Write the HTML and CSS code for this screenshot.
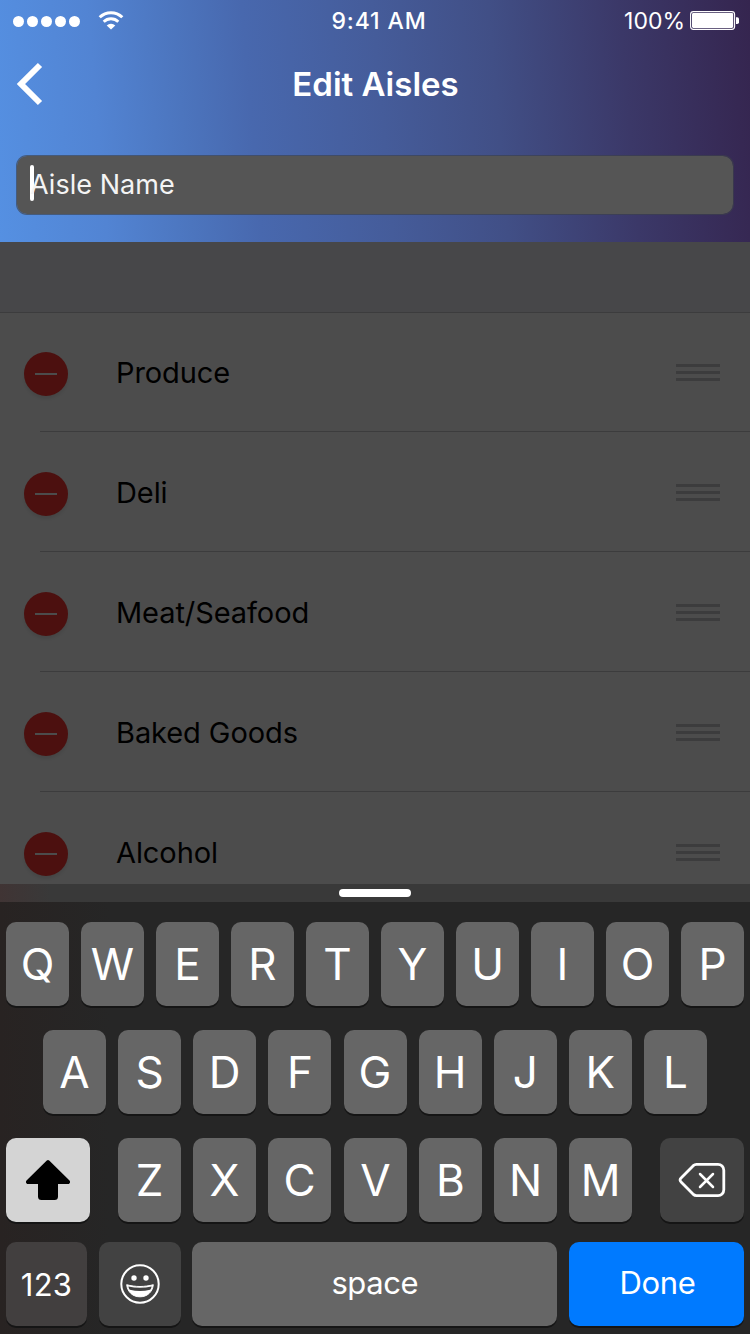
FILE: index.html
```html
<!DOCTYPE html>
<html lang="en">
<head>
<meta charset="utf-8">
<title>Edit Aisles</title>
<link rel="stylesheet" href="styles.css">
</head>
<body>
<div class="screen">
  <header class="header">
    <div class="status">
      <div class="status-left">
        <span class="dots"><i></i><i></i><i></i><i></i><i></i></span>
        <svg class="wifi" width="26" height="20" viewBox="0 0 26 20" fill="none" stroke="#fff">
          <path d="M1.700 6.300a16 16 0 0 1 22.600 0" stroke-width="3"/>
          <path d="M5.700 10.800a10.300 10.300 0 0 1 14.600 0" stroke-width="2.800"/>
          <path d="M13 18.500l-4.300-4.100a6.200 6.200 0 0 1 8.600 0z" fill="#fff" stroke="none"/>
        </svg>
      </div>
      <span class="time">9:41 AM</span>
      <div class="status-right">
        <span class="percent">100%</span>
        <svg width="50" height="20" viewBox="0 0 50 20">
          <rect x=".6" y=".6" width="44" height="17.800" rx="2.800" fill="none" stroke="#fff" stroke-width="1.100"/>
          <rect x="2" y="2" width="41.200" height="15" rx="1.400" fill="#fff"/>
          <path d="M46 6.200h1.200a1.800 1.800 0 0 1 1.800 1.800v3.200a1.800 1.800 0 0 1-1.800 1.800H46z" fill="#fff"/>
        </svg>
      </div>
    </div>
    <div class="navbar">
      <svg class="back" width="28" height="44" viewBox="0 0 28 44"><path d="M24 3L5 22l19 19" fill="none" stroke="#fff" stroke-width="6"/></svg>
      <h1 class="title">Edit Aisles</h1>
    </div>
    <div class="field"><span class="caret"></span><span class="placeholder">Aisle Name</span></div>
  </header>

  <main class="list">
    <div class="section"></div>
    <div class="row"><span class="remove"></span><span class="label">Produce</span><span class="grip"><i></i><i></i><i></i></span></div>
    <div class="row"><span class="remove"></span><span class="label">Deli</span><span class="grip"><i></i><i></i><i></i></span></div>
    <div class="row"><span class="remove"></span><span class="label">Meat/Seafood</span><span class="grip"><i></i><i></i><i></i></span></div>
    <div class="row"><span class="remove"></span><span class="label">Baked Goods</span><span class="grip"><i></i><i></i><i></i></span></div>
    <div class="row"><span class="remove"></span><span class="label">Alcohol</span><span class="grip"><i></i><i></i><i></i></span></div>
  </main>

  <section class="keyboard">
    <div class="handle-bar"><span class="handle"></span></div>
    <div class="keys">
      <div class="key-row"><span class="key">Q</span><span class="key">W</span><span class="key">E</span><span class="key">R</span><span class="key">T</span><span class="key">Y</span><span class="key">U</span><span class="key">I</span><span class="key">O</span><span class="key">P</span></div>
      <div class="key-row inset"><span class="key">A</span><span class="key">S</span><span class="key">D</span><span class="key">F</span><span class="key">G</span><span class="key">H</span><span class="key">J</span><span class="key">K</span><span class="key">L</span></div>
      <div class="key-row">
        <span class="key shift"><svg width="44" height="40" viewBox="0 0 44 40"><path d="M20.800.6a1.700 1.700 0 0 1 2.400 0L43.500 20.600c1.100 1.300.5 3.400-1.500 3.400H32v12.500a3.500 3.500 0 0 1-3.500 3.500h-13a3.500 3.500 0 0 1-3.500-3.500V24H2C0 24-.6 21.900.5 20.600z"/></svg></span>
        <div class="letters"><span class="key">Z</span><span class="key">X</span><span class="key">C</span><span class="key middle">V</span><span class="key">B</span><span class="key">N</span><span class="key">M</span></div>
        <span class="key dark delete"><svg width="48" height="36" viewBox="0 0 48 36" fill="none" stroke="#fff" stroke-width="2.800" stroke-linecap="round" stroke-linejoin="round"><path d="M18.500 2.400H40a5.800 5.800 0 0 1 5.800 5.800v19.600a5.800 5.800 0 0 1-5.800 5.800H18.500c-1.500 0-2.500-.6-3.500-1.500L3.300 20.200c-1.700-1.600-1.700-2.800 0-4.400L15 3.900c1-.9 2-1.500 3.500-1.500z"/><path d="M22 12l13 13M35 12L22 25" stroke-width="2.500"/></svg></span>
      </div>
      <div class="key-row bottom">
        <span class="key dark numbers"><span>123</span></span>
        <span class="key dark emoji"><svg width="40" height="40" viewBox="0 0 40 40"><circle cx="20" cy="20" r="18.700" fill="none" stroke="#fff" stroke-width="2"/><circle cx="14" cy="14" r="2.700" fill="#fff"/><circle cx="26" cy="14" r="2.700" fill="#fff"/><path d="M6.700 20.700c8.500 2.400 18.100 2.400 26.600 0-.8 7.300-6 12.100-13.300 12.100S7.500 28 6.700 20.700z" fill="#fff" stroke="#fff" stroke-width="1" stroke-linejoin="round"/><path d="M8.400 22.400c7.400 1.700 15.800 1.700 23.200 0-.3 1.500-.8 2.700-1.500 3.400-6.500 1.700-13.700 1.700-20.200 0-.7-.7-1.200-1.900-1.500-3.400z" fill="#424242"/></svg></span>
        <span class="key space"><span>space</span></span>
        <span class="key done"><span>Done</span></span>
      </div>
    </div>
  </section>
</div>
</body>
</html>
```
FILE: styles.css
```css
* { box-sizing: border-box; }
body { margin: 0; font-family: Inter, "Liberation Sans", sans-serif; }
.screen { width: 750px; height: 1334px; overflow: hidden; display: flex; flex-direction: column; background: #4c4c4c; }

.header {
  height: 242px; flex: none; color: #fff;
  background: linear-gradient(85deg, #5590e2 0%, #5284d3 14%, #4c75be 25%, #4868ae 34%, #455c9a 51%, #414f86 66%, #3b3868 83%, #35254f 100%);
}
.status { height: 40px; display: grid; grid-template-columns: 1fr auto 1fr; align-items: center; padding: 0 10px 0 13px; }
.status-left { display: flex; align-items: center; gap: 18px; }
.dots { display: flex; gap: 3px; padding-top: 1px; }
.dots i { width: 11px; height: 11px; border-radius: 50%; background: #fff; }
.time { font-size: 23px; line-height: 40px; font-weight: 500; letter-spacing: .9px; padding-left: 5px; padding-top: 1px; }
.status-right { display: flex; align-items: center; justify-content: flex-end; gap: 5px; }
.percent { font-size: 23px; line-height: 40px; padding-top: 1px; }
.navbar { height: 88px; display: grid; grid-template-columns: 60px 1fr 60px; align-items: center; }
.back { margin-left: 16px; }
.title { margin: 0; padding-left: 1px; font-size: 33px; line-height: 44px; font-weight: 600; text-align: center; }
.field { height: 60px; margin: 27px 16px 0; border: 1px solid rgba(60,64,74,.65); border-radius: 11px; background: #555; background-clip: padding-box; display: flex; align-items: center; padding-left: 13px; }
.caret { width: 4px; height: 36px; margin-top: -4px; border-radius: 2px; background: #fff; }
.placeholder { margin-left: -4px; font-size: 27px; line-height: 36px; letter-spacing: .04px; color: #f4f4f4; margin-top: -1px; }

.list { height: 642px; flex: none; overflow: hidden; }
.section { height: 71px; background: #474749; border-bottom: 1px solid #3c3c3d; }
.row { height: 120px; margin-top: -1px; margin-bottom: 1px; display: flex; align-items: center; padding: 0 30px 0 24px; background: linear-gradient(#3c3c3d, #3c3c3d) 40px 119px / 710px 1px no-repeat; }
.remove { width: 44px; height: 44px; margin-top: 4px; border-radius: 50%; background: #4c100f; box-shadow: 0 3px 3px rgba(0,0,0,.08); display: flex; align-items: center; justify-content: center; }
.remove::after { content: ""; width: 22px; height: 2px; background: #4c4c4c; }
.label { margin-left: 48px; margin-top: 2px; flex: 1; font-size: 29px; line-height: 40px; letter-spacing: -.08px; color: #000; }
.grip { width: 44px; display: flex; flex-direction: column; gap: 4px; margin-top: 1px; }
.grip i { height: 3px; background: #3c3c3d; }

.keyboard { height: 450px; flex: none; background: linear-gradient(90deg, #282322 0, #262626 110px); }
.handle-bar { height: 18px; background: linear-gradient(90deg, #403434 0, #393939 50px); display: flex; justify-content: center; align-items: center; }
.handle { width: 72px; height: 8px; border-radius: 4px; background: #fff; }
.keys { padding: 20px 6px 0; }
.key-row { display: flex; justify-content: space-between; height: 84px; margin-bottom: 24px; }
.inset { margin-left: 37px; margin-right: 37px; }
.letters { width: 514px; display: flex; gap: 12px; }
.middle { margin-left: 1px; }
.key { width: 63px; height: 84px; flex: none; border-radius: 10px; background: #666; color: #fff; box-shadow: 0 2px 0 #151515; display: flex; align-items: center; justify-content: center; font-size: 44px; font-weight: 400; line-height: 84px; }
.dark { background: #424242; }
.shift { width: 84px; background: #d4d4d4; }
.delete { width: 84px; }
.bottom { margin-top: -4px; }
.bottom .key { font-size: 31px; }
.key-row .numbers { width: 81px; background: #423f3f; padding-top: 2px; letter-spacing: .2px; }
.emoji { width: 82px; }
.space { width: 365px; padding-bottom: 2px; }
.space span { letter-spacing: -.4px; }
.done { width: 175px; background: #007aff; padding: 0 0 2px 2px; }
.done span { letter-spacing: -.3px; }
```
